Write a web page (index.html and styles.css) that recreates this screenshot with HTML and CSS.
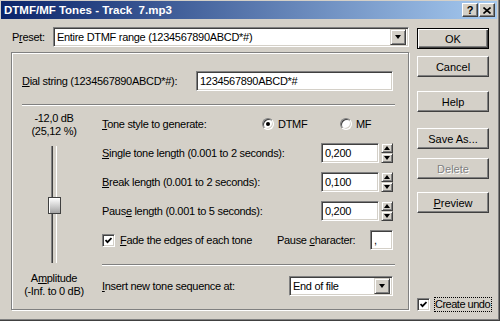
FILE: index.html
```html
<!DOCTYPE html>
<html lang="en">
<head>
    <meta charset="UTF-8">
    <title>DTMF/MF Tones</title>
    <link rel="stylesheet" href="styles.css">
</head>
<body>
<div class="window">
    <!-- Title bar -->
    <div class="titlebar">
        <span class="title">DTMF/MF Tones - Track  7.mp3</span>
        <div class="caption-buttons">
            <span class="caption-btn">?</span>
            <span class="caption-btn">
                <svg width="8" height="7" viewBox="0 0 8 7"><path d="M0.5 0.5 L7.5 6.5 M7.5 0.5 L0.5 6.5" stroke="#000" stroke-width="1.6"/></svg>
            </span>
        </div>
    </div>

    <div class="client">
        <div class="main">
            <!-- Preset -->
            <div class="preset-row">
                <label class="preset-label">P<u>r</u>eset:</label>
                <div class="combo">
                    <span class="combo-text">Entire DTMF range (1234567890ABCD*#)</span>
                    <span class="drop-btn"><i class="arrow-down"></i></span>
                </div>
            </div>

            <!-- Settings group -->
            <div class="group">
                <div class="dial-row">
                    <label><u>D</u>ial string (1234567890ABCD*#):</label>
                    <div class="field field-dial">1234567890ABCD*#</div>
                </div>
                <div class="separator"></div>

                <div class="body-row">
                    <div class="amp-col">
                        <div class="amp-text">-12,0 dB<br>(25,12 %)</div>
                        <div class="slider">
                            <div class="slider-track"></div>
                            <div class="slider-thumb"></div>
                        </div>
                        <div class="amp-text amp-label">A<u>m</u>plitude<br>(-Inf. to 0 dB)</div>
                    </div>

                    <div class="settings">
                        <div class="row row-first">
                            <span class="tone-label"><u>T</u>one style to generate:</span>
                            <span class="radio-option"><span class="radio checked"></span>DTMF</span>
                            <span class="radio-option"><span class="radio"></span>MF</span>
                        </div>
                        <div class="row">
                            <span class="grow"><u>S</u>ingle tone length (0.001 to 2 seconds):</span>
                            <div class="field field-num">0,200</div>
                            <div class="spin"><span class="spin-btn"><i class="arrow-up"></i></span><span class="spin-btn"><i class="arrow-down"></i></span></div>
                        </div>
                        <div class="row">
                            <span class="grow"><u>B</u>reak length (0.001 to 2 seconds):</span>
                            <div class="field field-num">0,100</div>
                            <div class="spin"><span class="spin-btn"><i class="arrow-up"></i></span><span class="spin-btn"><i class="arrow-down"></i></span></div>
                        </div>
                        <div class="row">
                            <span class="grow">Paus<u>e</u> length (0.001 to 5 seconds):</span>
                            <div class="field field-num">0,200</div>
                            <div class="spin"><span class="spin-btn"><i class="arrow-up"></i></span><span class="spin-btn"><i class="arrow-down"></i></span></div>
                        </div>
                        <div class="row">
                            <span class="grow check-item">
                                <span class="check"><svg width="7" height="7" viewBox="0 0 7 7"><polyline points="0.5,3 2.5,5.2 6.5,1" fill="none" stroke="#000" stroke-width="1.8"/></svg></span>
                                <span><u>F</u>ade the edges of each tone</span>
                            </span>
                            <span class="pause-char">
                                <span>Pause <u>c</u>haracter:</span>
                                <span class="field field-char">,</span>
                            </span>
                        </div>
                        <div class="separator separator-low"></div>
                        <div class="row row-insert">
                            <span class="grow"><u>I</u>nsert new tone sequence at:</span>
                            <div class="combo combo-small">
                                <span class="combo-text">End of file</span>
                                <span class="drop-btn"><i class="arrow-down"></i></span>
                            </div>
                        </div>
                    </div>
                </div>
            </div>
        </div>

        <!-- Buttons -->
        <div class="side">
            <button class="btn btn-default btn-ok">OK</button>
            <button class="btn btn-cancel">Cancel</button>
            <button class="btn btn-help">Help</button>
            <button class="btn btn-save">Save As...</button>
            <button class="btn btn-delete" disabled>Delete</button>
            <button class="btn btn-preview"><u>P</u>review</button>
            <div class="undo">
                <span class="check"><svg width="7" height="7" viewBox="0 0 7 7"><polyline points="0.5,3 2.5,5.2 6.5,1" fill="none" stroke="#000" stroke-width="1.8"/></svg></span>
                <span class="undo-text">Create undo</span>
            </div>
        </div>
    </div>
</div>
</body>
</html>
```

FILE: styles.css
```css
body {
    margin: 0;
    font-family: "Liberation Sans", Arial, sans-serif;
    font-size: 11px;
    letter-spacing: -0.3px;
    color: #000;
    background: #d4d0c8;
}
u {
    text-decoration-thickness: 1px;
    text-underline-offset: 1px;
}
.window {
    width: 500px;
    height: 321px;
    box-sizing: border-box;
    padding: 1px 2px 2px 1px;
    background: #d4d0c8;
    border-right: 1px solid #404040;
    border-bottom: 1px solid #404040;
    box-shadow: inset -1px -1px #808080;
}

/* Title bar */
.titlebar {
    height: 18px;
    display: flex;
    align-items: center;
    padding: 0 2px 0 3px;
    background: linear-gradient(to right, #0a246a, #a6caf0);
    color: #fff;
    font-weight: bold;
    font-size: 11.5px;
    letter-spacing: 0;
}
.title {
    white-space: pre;
}
.caption-buttons {
    margin-left: auto;
    display: flex;
    gap: 1px;
}
.caption-btn {
    width: 16px;
    height: 14px;
    box-sizing: border-box;
    display: flex;
    align-items: center;
    justify-content: center;
    background: #d4d0c8;
    color: #000;
    font-size: 11px;
    border: 1px solid;
    border-color: #fff #404040 #404040 #fff;
    box-shadow: inset -1px -1px #808080;
}

/* Client area */
.client {
    display: flex;
    padding: 8px 0 0 10px;
}
.main {
    width: 398px;
}
.preset-row {
    display: flex;
    align-items: center;
    height: 20px;
}
.preset-label {
    width: 42px;
    padding-left: 1px;
    box-sizing: border-box;
}

/* Sunken controls */
.field, .combo, .check, .radio {
    box-sizing: border-box;
    background: #fff;
    border: 1px solid;
    border-color: #808080 #fff #fff #808080;
    box-shadow: inset 1px 1px #404040, inset -1px -1px #d4d0c8;
}
.field {
    height: 20px;
    display: flex;
    align-items: center;
    padding-left: 3px;
}
.combo {
    flex: 1;
    height: 20px;
    display: flex;
    align-items: center;
    padding: 0 2px 0 3px;
}
.combo-text {
    flex: 1;
}
.drop-btn, .spin-btn {
    box-sizing: border-box;
    display: flex;
    align-items: center;
    justify-content: center;
    background: #d4d0c8;
    border: 1px solid;
    border-color: #d4d0c8 #404040 #404040 #d4d0c8;
    box-shadow: inset 1px 1px #fff, inset -1px -1px #808080;
}
.drop-btn {
    width: 16px;
    height: 16px;
}
.arrow-down, .arrow-up {
    width: 0;
    height: 0;
    border-left: 3.5px solid transparent;
    border-right: 3.5px solid transparent;
}
.arrow-down {
    border-top: 4px solid #000;
}
.arrow-up {
    border-bottom: 4px solid #000;
}

/* Group box */
.group {
    margin-top: 5px;
    height: 258px;
    box-sizing: border-box;
    padding: 18px 15px 0 10px;
    border: 1px solid #808080;
    box-shadow: inset 1px 1px #fff, 1px 1px #fff;
}
.dial-row {
    display: flex;
    align-items: center;
    justify-content: space-between;
    height: 20px;
}
.field-dial {
    width: 197px;
}
.separator {
    border-top: 1px solid #808080;
    border-bottom: 1px solid #fff;
    margin: 13px -2px 0 0;
}
.separator-low {
    margin-top: 14px;
}
.body-row {
    display: flex;
}

/* Amplitude slider */
.amp-col {
    width: 64px;
    flex: none;
    margin-top: 6px;
    display: flex;
    flex-direction: column;
    align-items: center;
}
.amp-text {
    line-height: 13px;
    text-align: center;
    white-space: nowrap;
}
.amp-label {
    margin-top: 9px;
}
.slider {
    position: relative;
    width: 13px;
    height: 117px;
    margin-top: 8px;
    display: flex;
    justify-content: center;
}
.slider-track {
    width: 4px;
    height: 100%;
    background: #d4d0c8;
    border-left: 1px solid #808080;
    border-right: 1px solid #fff;
    box-shadow: inset 1px 0 #404040;
}
.slider-thumb {
    position: absolute;
    top: 51px;
    left: 0;
    width: 13px;
    height: 17px;
    box-sizing: border-box;
    border: 1px solid #404040;
    background: linear-gradient(#fff, #a4a4a4);
    box-shadow: inset 1px 1px #fff;
}

/* Settings column */
.settings {
    flex: 1;
    min-width: 0;
    margin-left: 16px;
    padding-top: 8px;
}
.row {
    display: flex;
    align-items: center;
    height: 20px;
    margin-top: 9px;
}
.row-first {
    margin-top: 0;
}
.row-insert {
    margin-top: 10px;
}
.grow {
    flex: 1;
}
.tone-label {
    width: 160px;
}
.radio-option {
    width: 78px;
    display: flex;
    align-items: center;
    gap: 4px;
}
.radio-option:last-child {
    width: auto;
}
.radio {
    width: 12px;
    height: 12px;
    border-radius: 50%;
    position: relative;
}
.radio.checked::after {
    content: "";
    position: absolute;
    left: 3px;
    top: 3px;
    width: 4px;
    height: 4px;
    border-radius: 50%;
    background: #000;
}
.field-num {
    width: 58px;
}
.spin {
    width: 12px;
    height: 20px;
    margin-left: 2px;
    display: flex;
    flex-direction: column;
}
.spin-btn {
    flex: 1;
}
.check-item {
    display: flex;
    align-items: center;
    gap: 5px;
}
.check {
    width: 13px;
    height: 13px;
    flex: none;
    display: flex;
    align-items: center;
    justify-content: center;
}
.pause-char {
    width: 116px;
    display: flex;
    align-items: center;
    justify-content: space-between;
}
.field-char {
    width: 23px;
}
.combo-small {
    flex: none;
    width: 104px;
}

/* Side buttons */
.side {
    width: 72px;
    margin-left: 8px;
    display: flex;
    flex-direction: column;
}
.btn {
    height: 21px;
    box-sizing: border-box;
    padding: 0;
    font: inherit;
    color: #000;
    background: #d4d0c8;
    border: 1px solid;
    border-color: #fff #404040 #404040 #fff;
    box-shadow: inset -1px -1px #808080;
}
.btn-default {
    border: 1px solid #000;
    box-shadow: inset 1px 1px #fff, inset -1px -1px #404040, inset -2px -2px #808080;
}
.btn-ok { margin-top: 1px; }
.btn-cancel { margin-top: 7px; }
.btn-help { margin-top: 14px; }
.btn-save { margin-top: 16px; }
.btn-delete {
    margin-top: 9px;
    color: #808080;
    text-shadow: 1px 1px #fff;
}
.btn-preview { margin-top: 13px; }
.undo {
    margin-top: auto;
    margin-bottom: -2px;
    height: 16px;
    display: flex;
    align-items: center;
    white-space: nowrap;
}
.undo-text {
    margin-left: 4px;
    padding: 0 1px 0 0;
    border: 1px dotted #000;
    line-height: 13px;
    letter-spacing: -0.5px;
}
```
